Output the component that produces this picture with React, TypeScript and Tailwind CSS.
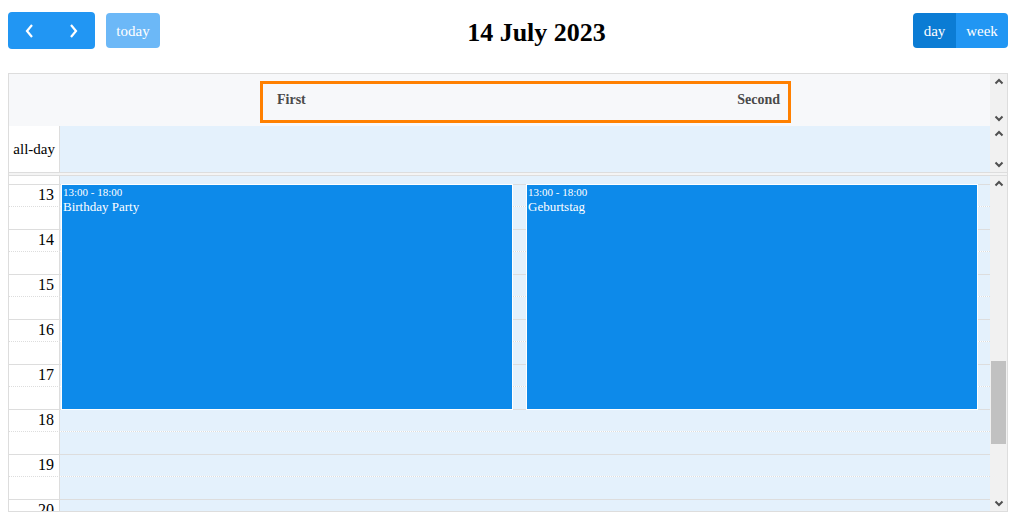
import React from "react";

const Up = () => (
  <svg width="10" height="7" viewBox="0 0 10 7">
    <polyline points="1.5,5.5 5,2 8.5,5.5" fill="none" stroke="#505050" strokeWidth="2" />
  </svg>
);
const Down = () => (
  <svg width="10" height="7" viewBox="0 0 10 7">
    <polyline points="1.5,1.5 5,5 8.5,1.5" fill="none" stroke="#505050" strokeWidth="2" />
  </svg>
);

function Scrollbar({ thumb }: { thumb?: { top: number; height: number } }) {
  return (
    <div className="relative w-[17px] shrink-0 bg-[#f1f1f1] flex flex-col justify-between items-center py-[4px]">
      <Up />
      {thumb && (
        <div
          className="absolute left-[1px] right-[1px] bg-[#c1c1c1]"
          style={{ top: thumb.top, height: thumb.height }}
        />
      )}
      <Down />
    </div>
  );
}

const hours = [13, 14, 15, 16, 17, 18, 19, 20];

function Event({ title }: { title: string }) {
  return (
    <div className="absolute left-[2px] right-[13px] top-[1px] h-[224px] bg-[#0d8aea] shadow-[0_0_0_1px_#ffffff] text-white px-[1px] leading-none">
      <div className="text-[11px] mt-[2px]">13:00 - 18:00</div>
      <div className="text-[13px] mt-[2px]">{title}</div>
    </div>
  );
}

export default function App() {
  return (
    <div className="px-2 pt-3 font-['Liberation_Serif',serif] bg-white w-[1027px] h-[525px] overflow-hidden">
      {/* toolbar */}
      <div className="flex items-center justify-between w-[1000px] h-[37px] mb-6">
        <div className="flex items-center gap-[11px]">
          <div className="flex h-[37px] w-[87px] rounded-[4px] bg-[#2196f3] overflow-hidden">
            <div className="flex-1 flex items-center justify-center">
              <svg width="12" height="16" viewBox="0 0 12 16">
                <polyline points="8,2 3,8 8,14" fill="none" stroke="white" strokeWidth="2.2" />
              </svg>
            </div>
            <div className="flex-1 flex items-center justify-center">
              <svg width="12" height="16" viewBox="0 0 12 16">
                <polyline points="4,2 9,8 4,14" fill="none" stroke="white" strokeWidth="2.2" />
              </svg>
            </div>
          </div>
          <div className="h-[35px] w-[54px] rounded-[4px] bg-[#6cb8f7] text-white text-[15px] flex items-center justify-center pt-[2px]">
            today
          </div>
        </div>
        <div className="text-[26px] font-bold text-black pt-[3px]">14 July 2023</div>
        <div className="flex h-[35px] rounded-[4px] overflow-hidden text-white text-[15px]">
          <div className="w-[43px] bg-[#0b7cd4] flex items-center justify-center pt-[2px]">day</div>
          <div className="w-[52px] bg-[#2196f3] flex items-center justify-center pt-[2px]">week</div>
        </div>
      </div>

      {/* calendar */}
      <div className="w-[1000px] h-[439px] border border-[#dddddd] flex flex-col">
        {/* header */}
        <div className="flex h-[52px] shrink-0">
          <div className="flex-1 bg-[#f7f8fa] pt-[7px] pl-[251px]">
            <div className="w-[531px] h-[42px] border-[3px] border-[#ff8000] flex items-center justify-between pl-[14px] pr-[8px] pb-[6px] text-[14px] font-bold text-[#4a4a4a]">
              <span>First</span>
              <span>Second</span>
            </div>
          </div>
          <Scrollbar />
        </div>
        {/* all-day */}
        <div className="flex h-[46px] shrink-0">
          <div className="w-[51px] border-r border-[#dddddd] bg-white flex items-center justify-end pr-[4px] text-[15px] text-black">
            all-day
          </div>
          <div className="flex-1 bg-[#e4f1fc]" />
          <Scrollbar />
        </div>
        {/* divider */}
        <div className="h-[4px] shrink-0 border-y border-[#dddddd] bg-[#f4f4f4]" />
        {/* time grid */}
        <div className="flex flex-1 min-h-0 overflow-hidden">
          <div className="flex-1 flex flex-col overflow-hidden">
            <div className="flex h-[8px] shrink-0">
              <div className="w-[51px] border-r border-[#dddddd] bg-white" />
              <div className="flex-1 bg-[#e4f1fc]" />
            </div>
            <div className="relative flex flex-col">
              {hours.map((h) => (
                <div key={h} className="flex flex-col shrink-0">
                  <div className="flex h-[22px] border-t border-[#dddddd]">
                    <div className="w-[51px] border-r border-[#dddddd] bg-white text-right pr-[5px] text-[16px] leading-none pt-[2px] text-black">
                      {h}
                    </div>
                    <div className="flex-1 bg-[#e4f1fc]" />
                  </div>
                  <div className="flex h-[23px] border-t border-dotted border-[#dddddd]">
                    <div className="w-[51px] border-r border-[#dddddd] bg-white" />
                    <div className="flex-1 bg-[#e4f1fc]" />
                  </div>
                </div>
              ))}
              <div className="absolute top-0 left-[51px] right-0 flex">
                <div className="relative flex-1">
                  <Event title="Birthday Party" />
                </div>
                <div className="relative flex-1">
                  <Event title="Geburtstag" />
                </div>
              </div>
            </div>
          </div>
          <Scrollbar thumb={{ top: 185, height: 83 }} />
        </div>
      </div>
    </div>
  );
}
